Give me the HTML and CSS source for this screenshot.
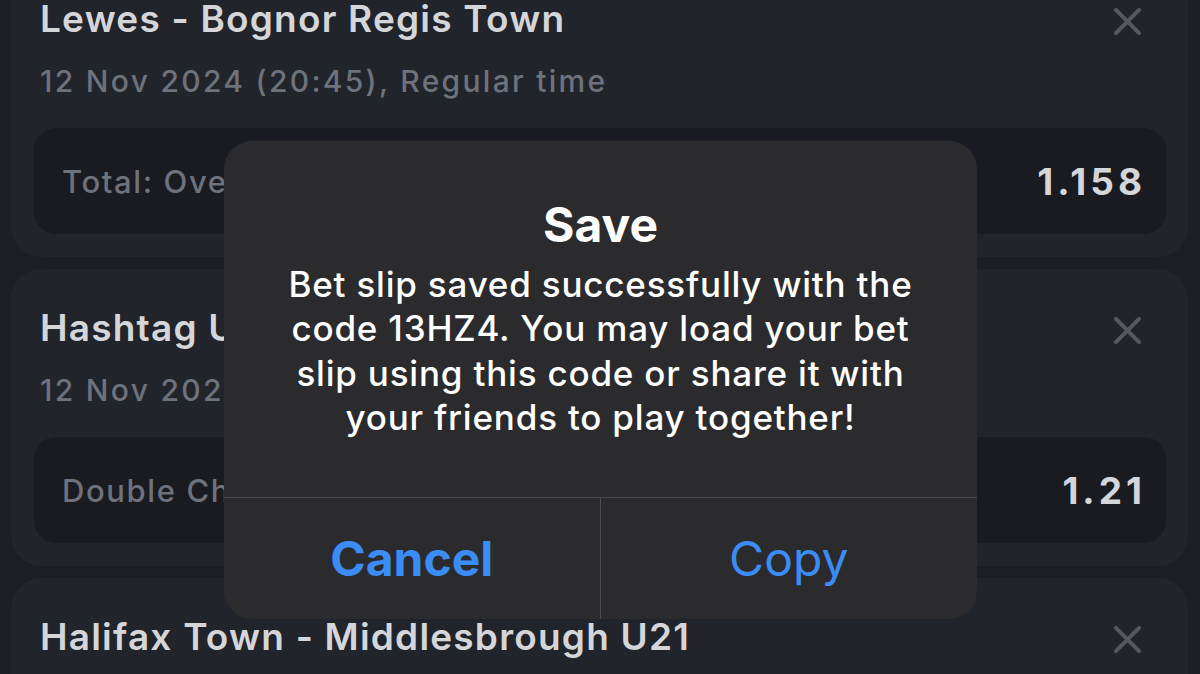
FILE: index.html
```html
<!DOCTYPE html>
<html lang="en">
<head>
  <meta charset="utf-8">
  <title>Bet slip – Save</title>
  <link rel="stylesheet" href="styles.css">
</head>
<body>

<div class="slip">
  <div class="card first">
    <div class="head">
      <div class="match">Lewes - Bognor Regis Town</div>
      <svg class="close" viewBox="0 0 30 30"><path d="M3 3L27 27M27 3L3 27"/></svg>
    </div>
    <div class="date">12 Nov 2024 (20:45), Regular time</div>
    <div class="pick"><span class="market">Total: Over 2.5</span><span class="odds">1.158</span></div>
  </div>

  <div class="card">
    <div class="head">
      <div class="match">Hashtag United - Leyton Orient U21</div>
      <svg class="close" viewBox="0 0 30 30"><path d="M3 3L27 27M27 3L3 27"/></svg>
    </div>
    <div class="date">12 Nov 2024 (19:45), Regular time</div>
    <div class="pick"><span class="market">Double Chance: 1X</span><span class="odds">1.21</span></div>
  </div>

  <div class="card">
    <div class="head">
      <div class="match">Halifax Town - Middlesbrough U21</div>
      <svg class="close" viewBox="0 0 30 30"><path d="M3 3L27 27M27 3L3 27"/></svg>
    </div>
    <div class="date">12 Nov 2024 (19:45), Regular time</div>
  </div>
</div>

<div class="overlay">
  <div class="alert">
    <div class="alert-body">
      <div class="alert-title">Save</div>
      <div class="alert-text">Bet slip saved successfully with the<br>code 13HZ4. You may load your bet<br>slip using this code or share it with<br>your friends to play together!</div>
    </div>
    <div class="alert-actions">
      <div class="btn cancel">Cancel</div>
      <div class="btn">Copy</div>
    </div>
  </div>
</div>

</body>
</html>
```

FILE: styles.css
```css
html, body { margin: 0; padding: 0; }
body {
  width: 1200px;
  height: 674px;
  overflow: hidden;
  background: #1b1e25;
  font-family: Inter, "Noto Sans", sans-serif;
  position: relative;
}

.slip {
  display: flex;
  flex-direction: column;
  gap: 12px;
  padding: 0 12px 0 11px;
}

.card {
  background: #21242b;
  border-radius: 30px;
  padding: 40px 22px 23px 29px;
}
.card.first { margin-top: -40px; }

.head {
  display: flex;
  align-items: center;
  justify-content: space-between;
  height: 36px;
}
.match {
  color: #d5d6d9;
  font-size: 37px;
  font-weight: 600;
  letter-spacing: 1.2px;
  white-space: nowrap;
}
.close {
  flex: none;
  width: 29px;
  height: 29px;
  margin: 6px 24px 0 0;
  fill: none;
  stroke: #55585e;
  stroke-width: 4.2;
  stroke-linecap: round;
}

.date {
  margin-top: 27px;
  color: #6e727d;
  font-size: 30px;
  font-weight: 500;
  line-height: 36px;
  letter-spacing: 2.3px;
}

.pick {
  margin: 29px 0 0 -6px;
  background: #191b21;
  border-radius: 22px;
  height: 106px;
  display: flex;
  align-items: center;
  justify-content: space-between;
  padding: 0 20px 0 28px;
}
.market {
  color: #6e727d;
  font-size: 31px;
  font-weight: 500;
  letter-spacing: 1.6px;
}
.odds {
  color: #d5d6d9;
  font-size: 37px;
  font-weight: 700;
  letter-spacing: 4px;
}

.overlay {
  position: absolute;
  inset: 0;
  display: flex;
  justify-content: center;
  align-items: flex-start;
  padding-top: 141px;
  padding-left: 1px;
}
.alert {
  width: 753px;
  background: #2b2b2e;
  border-radius: 28px;
  overflow: hidden;
  color: #fff;
  text-align: center;
}
.alert-body {
  padding: 59px 20px 58px;
}
.alert-title {
  font-size: 48px;
  font-weight: 700;
  line-height: 50px;
}
.alert-text {
  margin-top: 12px;
  font-size: 35px;
  font-weight: 500;
  line-height: 44.3px;
  letter-spacing: 0.8px;
}
.alert-actions {
  display: grid;
  grid-template-columns: 1fr 1fr;
  border-top: 1px solid #4b4b4f;
  height: 121px;
}
.btn {
  display: flex;
  align-items: center;
  justify-content: center;
  color: #3b8cf5;
  font-size: 48px;
  font-weight: 400;
}
.btn.cancel {
  font-weight: 700;
  border-right: 1px solid #4b4b4f;
}
```
